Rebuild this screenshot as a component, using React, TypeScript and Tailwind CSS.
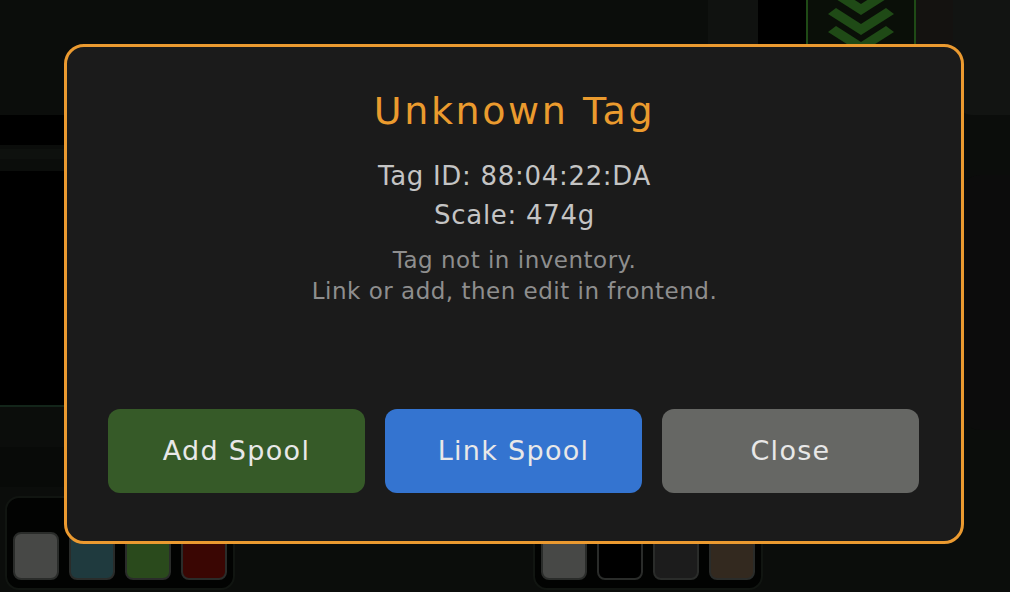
import { ReactNode } from "react";

const font = { fontFamily: '"DejaVu Sans", "Liberation Sans", sans-serif' };

function Swatch(props: { color: string }) {
  return (
    <div className={`w-[46px] h-[48px] rounded-[8px] border-2 border-[#2a2c2a] ${props.color}`} />
  );
}

function SwatchCard(props: { children: ReactNode; className?: string }) {
  return (
    <div
      className={`rounded-[14px] border-2 border-[#111511] bg-[#020302] px-[6px] pt-[34px] pb-[8px] flex gap-[10px] ${props.className ?? ""}`}
    >
      {props.children}
    </div>
  );
}

function Chevrons() {
  return (
    <svg width="106" height="46" viewBox="0 0 106 46" className="block">
      <path d="M28 -12 L53 4 L78 -12 L86 -6 L53 15 L20 -6 Z" fill="#1f4a16" />
      <path d="M28 8 L53 24 L78 8 L86 14 L53 35 L20 14 Z" fill="#1f4a16" />
      <path d="M28 26 L53 42 L78 26 L86 32 L53 53 L20 32 Z" fill="#1f4a16" />
    </svg>
  );
}

function Background() {
  return (
    <div className="w-[1010px] h-[592px] bg-[#0b0d0b] flex flex-col overflow-hidden">
      <div className="h-[115px] flex">
        <div className="flex-1" />
        <div className="w-[50px] bg-[#101210]" />
        <div className="w-[48px] bg-[#000]" />
        <div className="w-[110px] h-[46px] border-x-2 border-[#1f4a16] bg-[#0a0f08]">
          <Chevrons />
        </div>
        <div className="w-[37px] h-[46px] bg-[#141210]" />
        <div className="w-[57px] flex flex-col">
          <div className="h-[155px] rounded-bl-[20px] bg-[#121412]" />
        </div>
      </div>
      <div className="flex-1 flex">
        <div className="w-[64px] flex flex-col">
          <div className="h-[30px] bg-[#000]" />
          <div className="h-[10px] mt-[4px] bg-[#0e110e]" />
          <div className="h-[234px] mt-[12px] bg-[#000]" />
          <div className="h-[2px] bg-[#13251a]" />
          <div className="h-[40px] bg-[#0b0d0b]" />
          <div className="h-[40px] bg-[#080a08]" />
        </div>
        <div className="flex-1" />
        <div className="w-[50px] flex flex-col pt-[60px]">
          <div className="h-[255px] rounded-l-[20px] bg-[#0c0c0c]" />
        </div>
      </div>
      <div className="h-[100px] flex items-end pl-[5px] pb-[2px]">
        <SwatchCard>
          <Swatch color="bg-[#474846]" />
          <Swatch color="bg-[#1f3a3e]" />
          <Swatch color="bg-[#2a4a1c]" />
          <Swatch color="bg-[#3a0603]" />
        </SwatchCard>
        <SwatchCard className="ml-[298px]">
          <Swatch color="bg-[#474846]" />
          <Swatch color="bg-[#000]" />
          <Swatch color="bg-[#1c1c1c]" />
          <Swatch color="bg-[#33291f]" />
        </SwatchCard>
      </div>
    </div>
  );
}

function DialogButton(props: { label: string; className: string }) {
  return (
    <button
      className={`flex-1 h-[84px] rounded-[12px] text-[27px] tracking-[1.3px] text-[#e8e8e8] ${props.className}`}
      style={font}
    >
      {props.label}
    </button>
  );
}

export default function App() {
  return (
    <div className="relative w-[1010px] h-[592px] overflow-hidden" style={font}>
      <Background />
      <div className="absolute left-[64px] top-[44px] w-[900px] h-[500px] rounded-[20px] border-[3px] border-[#eb9a30] bg-[#1b1b1b] flex flex-col items-center pt-[42px] pl-[41px] pr-[40px] pb-[48px] overflow-hidden">
        <h1 className="text-[38px] leading-[45px] tracking-[2.6px] text-[#eb9b2e]">Unknown Tag</h1>
        <div className="mt-[23px] text-[26px] leading-[39px] tracking-[0.7px] text-[#c4c4c4] text-center">
          <div>Tag ID: 88:04:22:DA</div>
          <div>Scale: 474g</div>
        </div>
        <div className="mt-[10px] text-[23px] leading-[31px] tracking-[0.5px] text-[#8e8e8e] text-center">
          <div>Tag not in inventory.</div>
          <div>Link or add, then edit in frontend.</div>
        </div>
        <div className="mt-auto w-full flex gap-[20px] pr-[2px]">
          <DialogButton label="Add Spool" className="bg-[#365a28]" />
          <DialogButton label="Link Spool" className="bg-[#3474d0]" />
          <DialogButton label="Close" className="bg-[#666764]" />
        </div>
      </div>
    </div>
  );
}
